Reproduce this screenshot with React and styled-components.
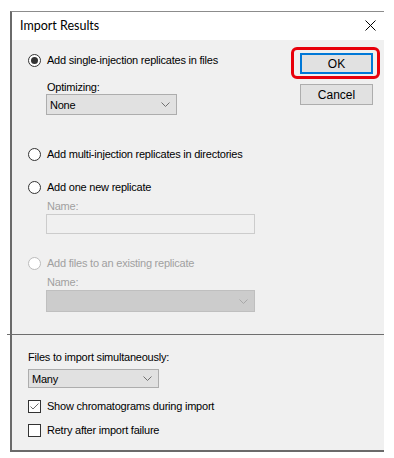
import React from "react";
import styled, { createGlobalStyle } from "styled-components";

const GlobalStyle = createGlobalStyle`
  html, body {
    margin: 0;
    padding: 0;
    background: #ffffff;
  }
  body {
    font-family: "Liberation Sans", Arial, sans-serif;
    font-size: 11px;
    letter-spacing: -0.22px;
    color: #000;
  }
`;

const Page = styled.div`
  padding: 11px 10px 5px 10px;
`;

const Window = styled.div`
  width: 372px;
  border-left: 2px solid #6a6a6a;
  border-top: 1px solid #8c8c8c;
  border-bottom: 2px solid #6a6a6a;
  background: #f0f0f0;
`;

const TitleBar = styled.div`
  height: 28px;
  background: #ffffff;
  display: flex;
  align-items: center;
  justify-content: space-between;
  padding: 0 8px 0 8px;
`;

const Title = styled.span`
  font-family: Lato, "Noto Sans", sans-serif;
  font-size: 12.5px;
  letter-spacing: 0;
  color: #000;
  margin-top: -2px;
`;

const CloseIcon = styled.svg`
  width: 11px;
  height: 11px;
  margin-top: -1px;
`;

const TopPanel = styled.div`
  display: grid;
  grid-template-columns: 1fr auto;
  padding-left: 16px;
  padding-bottom: 22px;
`;

const Options = styled.div`
  display: flex;
  flex-direction: column;
`;

const Buttons = styled.div`
  display: flex;
  flex-direction: column;
  align-items: center;
  padding-top: 7px;
  padding-right: 4px;
`;

const Highlight = styled.div`
  border: 3px solid #e8000b;
  border-radius: 6px;
  padding: 3px 4px 2px 6px;
`;

const Button = styled.div`
  box-sizing: border-box;
  width: 73px;
  height: 21px;
  background: #e1e1e1;
  border: ${(p) => (p.$default ? "2px solid #0078d7" : "1px solid #adadad")};
  display: flex;
  align-items: center;
  justify-content: center;
  font-size: 12px;
  letter-spacing: 0;
  color: #000;
  margin-top: ${(p) => p.$mt || 0}px;
  margin-left: ${(p) => (p.$default ? 0 : 2)}px;
`;

const Row = styled.label`
  display: flex;
  align-items: center;
  height: 16px;
  gap: 6px;
  margin-top: ${(p) => p.$mt || 0}px;
  color: ${(p) => (p.$disabled ? "#a0a0a0" : "#000")};
`;

const Radio = styled.span`
  box-sizing: border-box;
  flex: none;
  width: 13px;
  height: 13px;
  border-radius: 50%;
  border: 1px solid ${(p) => (p.$disabled ? "#bcbcbc" : "#333333")};
  background: #ffffff;
  display: flex;
  align-items: center;
  justify-content: center;
  &::after {
    content: "";
    width: 7px;
    height: 7px;
    border-radius: 50%;
    background: #333333;
    display: ${(p) => (p.$checked ? "block" : "none")};
  }
`;

const Checkbox = styled.span`
  box-sizing: border-box;
  flex: none;
  width: 13px;
  height: 13px;
  border: 1px solid #333333;
  background: #ffffff;
  display: flex;
  align-items: center;
  justify-content: center;
`;

const FieldLabel = styled.div`
  height: 14px;
  line-height: 14px;
  margin-top: ${(p) => p.$mt || 0}px;
  margin-left: ${(p) => p.$indent || 0}px;
  color: ${(p) => (p.$disabled ? "#a0a0a0" : "#000")};
`;

const Select = styled.div`
  box-sizing: border-box;
  width: ${(p) => p.$w}px;
  height: ${(p) => p.$h}px;
  margin-top: ${(p) => p.$mt || 0}px;
  margin-left: ${(p) => p.$indent || 0}px;
  background: ${(p) => (p.$disabled ? "#cccccc" : "#e1e1e1")};
  border: 1px solid ${(p) => (p.$disabled ? "#bfbfbf" : "#adadad")};
  display: flex;
  align-items: center;
  justify-content: space-between;
  padding: 0 6px 0 3px;
`;

const TextBox = styled.div`
  box-sizing: border-box;
  width: 209px;
  height: 20px;
  margin-top: ${(p) => p.$mt || 0}px;
  margin-left: 18px;
  background: #f0f0f0;
  border: 1px solid #cccccc;
`;

const Separator = styled.div`
  height: 1px;
  background: #6e6e6e;
  margin-left: -5px;
`;

const BottomPanel = styled.div`
  display: flex;
  flex-direction: column;
  padding: 0 16px 12px 16px;
`;

const Chevron = ({ color = "#707070" }) => (
  <svg width="9" height="5" viewBox="0 0 9 5">
    <polyline points="0.5,0.5 4.5,4.5 8.5,0.5" fill="none" stroke={color} strokeWidth="1" />
  </svg>
);

const Check = () => (
  <svg width="11" height="11" viewBox="0 0 11 11">
    <polyline points="1.5,5.5 4,8 9.5,2.5" fill="none" stroke="#6a6a6a" strokeWidth="1" />
  </svg>
);

export default function App() {
  return (
    <Page>
      <GlobalStyle />
      <Window>
        <TitleBar>
          <Title>Import Results</Title>
          <CloseIcon viewBox="0 0 11 11">
            <line x1="0.5" y1="0.5" x2="10.5" y2="10.5" stroke="#000" strokeWidth="1" />
            <line x1="10.5" y1="0.5" x2="0.5" y2="10.5" stroke="#000" strokeWidth="1" />
          </CloseIcon>
        </TitleBar>

        <TopPanel>
          <Options>
            <Row $mt={12}>
              <Radio $checked />
              Add single-injection replicates in files
            </Row>
            <FieldLabel $mt={12} $indent={19}>Optimizing:</FieldLabel>
            <Select $w={131} $h={21} $indent={18}>
              None
              <Chevron />
            </Select>

            <Row $mt={31}>
              <Radio />
              Add multi-injection replicates in directories
            </Row>

            <Row $mt={17}>
              <Radio />
              Add one new replicate
            </Row>
            <FieldLabel $mt={4} $indent={19} $disabled>Name:</FieldLabel>
            <TextBox $mt={1} />

            <Row $mt={21} $disabled>
              <Radio $disabled />
              Add files to an existing replicate
            </Row>
            <FieldLabel $mt={4} $indent={19} $disabled>Name:</FieldLabel>
            <Select $w={209} $h={22} $mt={1} $indent={18} $disabled>
              <span />
              <Chevron color="#a8a8a8" />
            </Select>
          </Options>

          <Buttons>
            <Highlight>
              <Button $default>OK</Button>
            </Highlight>
            <Button $mt={5}>Cancel</Button>
          </Buttons>
        </TopPanel>

        <Separator />

        <BottomPanel>
          <FieldLabel $mt={15}>Files to import simultaneously:</FieldLabel>
          <Select $w={131} $h={19} $mt={5}>
            Many
            <Chevron />
          </Select>
          <Row $mt={10}>
            <Checkbox>
              <Check />
            </Checkbox>
            Show chromatograms during import
          </Row>
          <Row $mt={8}>
            <Checkbox />
            Retry after import failure
          </Row>
        </BottomPanel>
      </Window>
    </Page>
  );
}
